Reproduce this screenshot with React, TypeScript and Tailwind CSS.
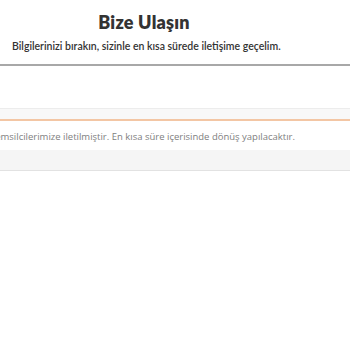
export default function App() {
  return (
    <div className="w-[350px] h-[350px] overflow-hidden bg-white">
      <div className="flex flex-col items-center pt-[10px]">
        <h1 className="text-[18px] leading-[24px] font-extrabold text-[#333] font-['Lato','Noto_Sans',sans-serif] tracking-[0.2px] ml-[-62px]">
          Bize Ulaşın
        </h1>
        <p className="mt-[5px] text-[10.5px] leading-[14px] font-semibold text-[#333] font-['Lato','Noto_Sans',sans-serif] self-start ml-[12px]">
          Bilgilerinizi bırakın, sizinle en kısa sürede iletişime geçelim.
        </p>
      </div>
      <div className="mt-[11px] h-[2px] bg-[#a8a8a8]" />

      <div className="mt-[42px] h-[11px] bg-[#f8f8f8] border-t border-[#ececec]" />
      <div className="h-[2px] bg-[#f3c6a4]" />
      <div className="flex justify-end overflow-hidden pr-[55px] pt-[8px] pb-[6px]">
        <p className="whitespace-nowrap text-[9.5px] leading-[15px] text-[#808080] font-['Open_Sans',sans-serif]">
          Mesajınız müşteri temsilcilerimize iletilmiştir. En kısa süre içerisinde dönüş yapılacaktır.
        </p>
      </div>
      <div className="h-[21px] bg-[#f5f5f5] border-b border-[#e2e2e2]" />
    </div>
  )
}
